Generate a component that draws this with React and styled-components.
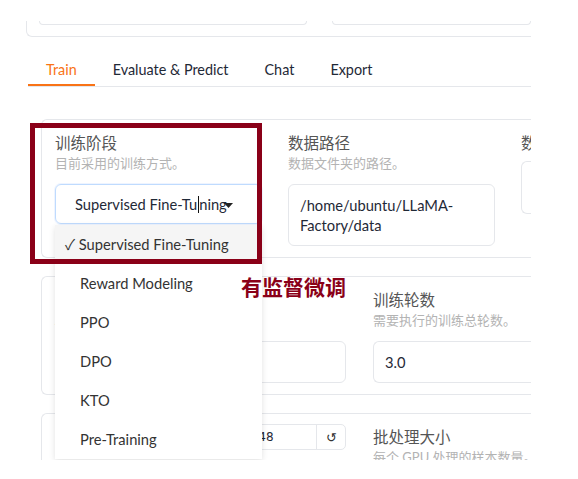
import React from 'react';
import styled, { createGlobalStyle } from 'styled-components';

const GlobalStyle = createGlobalStyle`
    body {
        margin: 0;
        background: #fff;
        font-family: Lato, "Noto Sans CJK SC", sans-serif;
        color: #1f2937;
    }
`

const Viewport = styled.div`
    position: relative;
    width: 531px;
    height: 460px;
    overflow: hidden;
`

const TopCard = styled.div`
    box-sizing: border-box;
    height: 16px;
    margin: 21px 0 0 26px;
    border: 1px solid #e5e7eb;
    border-top: none;
    border-right: none;
    border-radius: 0 0 0 6px;
    display: flex;
    align-items: flex-start;
    gap: 25px;
    padding: 0 0 0 12px;
`

const GhostInput = styled.div`
    box-sizing: border-box;
    height: 4px;
    border: 1px solid #e5e7eb;
    border-top: none;
    border-radius: 0 0 6px 6px;
    width: ${props => props.$w ? props.$w + 'px' : 'auto'};
    flex: ${props => props.$w ? 'none' : '1'};
`

const TabBar = styled.div`
    display: flex;
    margin: 17px 0 0 28px;
    border-bottom: 1px solid #e5e7eb;
`

const Tab = styled.div`
    height: 32px;
    line-height: 31px;
    padding: 0 18px;
    font-size: 14.4px;
    color: ${props => props.$active ? '#f97316' : '#1f2937'};
    box-shadow: ${props => props.$active ? 'inset 0 -2px 0 #f97316' : 'none'};
    margin-bottom: -1px;
    border-bottom: 1px solid transparent;
`

const Panel = styled.div`
    display: flex;
    flex-direction: column;
    gap: 18px;
    padding: 32px 0 0 41px;
`

const Card = styled.div`
    display: flex;
    gap: ${props => props.$gap || 26}px;
    border: 1px solid #e5e7eb;
    border-right: none;
    border-radius: 6px 0 0 6px;
    padding: 13px 0 11px 13px;
`

const Field = styled.div`
    position: relative;
    display: flex;
    flex-direction: column;
    flex: ${props => props.$w ? 'none' : '1'};
    width: ${props => props.$w ? props.$w + 'px' : 'auto'};
    min-width: 0;
`

const Label = styled.div`
    font-size: 15.5px;
    line-height: 20px;
    color: #555;
    white-space: nowrap;
`

const Info = styled.div`
    font-size: 13px;
    line-height: 18px;
    margin-top: 1px;
    color: #b3b3b3;
    white-space: nowrap;
`

const SelectWrap = styled.div`
    position: relative;
    margin-top: 12px;
`

const SelectBox = styled.div`
    box-sizing: border-box;
    height: 40px;
    display: flex;
    align-items: center;
    padding-left: 19px;
    font-size: 14.7px;
    border: 1px solid #bfdbfe;
    border-radius: 6px;
    box-shadow: 0 0 0 1px #eef4ff;
    white-space: nowrap;
    position: relative;
`

const Caret = styled.span`
    display: inline-block;
    width: 1px;
    height: 17px;
    background: #111;
    margin: 0 0.5px;
`

const Arrow = styled.svg`
    position: absolute;
    left: 168px;
    top: 18px;
`

const Menu = styled.ul`
    position: absolute;
    top: calc(100% + 1px);
    left: 0;
    width: 207px;
    margin: 0;
    padding: 0;
    list-style: none;
    background: #fff;
    box-shadow: 0 2px 6px rgba(0, 0, 0, 0.12);
    z-index: 2;
`

const MenuItem = styled.li`
    height: 39px;
    line-height: 39px;
    font-size: 14.7px;
    color: #333;
    padding-left: ${props => props.$selected ? 10 : 25}px;
    background: ${props => props.$selected ? '#f5f5f5' : '#fff'};
    white-space: nowrap;
`

const TextBox = styled.div`
    box-sizing: border-box;
    margin-top: ${props => props.$mt || 12}px;
    height: ${props => props.$h}px;
    padding: 10px 11px;
    font-size: 14.7px;
    line-height: 20px;
    border: 1px solid #e5e7eb;
    border-right: ${props => props.$open ? 'none' : '1px solid #e5e7eb'};
    border-radius: ${props => props.$open ? '6px 0 0 6px' : '6px'};
    color: #1f2937;
`

const SliderHead = styled.div`
    display: flex;
    justify-content: space-between;
    align-items: center;
    height: 20px;
`

const NumberGroup = styled.div`
    display: flex;
    height: 26px;
    border: 1px solid #e5e7eb;
    border-radius: 5px;
    box-sizing: border-box;
`

const NumberInput = styled.div`
    width: 78px;
    padding-left: 5px;
    box-sizing: border-box;
    font-family: "DejaVu Sans", sans-serif;
    font-size: 12px;
    line-height: 24px;
    color: #1f2937;
`

const ResetBtn = styled.div`
    width: 28px;
    border-left: 1px solid #e5e7eb;
    text-align: center;
    font-size: 13px;
    line-height: 24px;
    color: #333;
`

const Highlight = styled.div`
    position: absolute;
    left: 30px;
    top: 123px;
    width: 232px;
    height: 141px;
    box-sizing: border-box;
    border: 5px solid #8a0018;
    z-index: 3;
    pointer-events: none;
`

const Note = styled.div`
    position: absolute;
    left: 241px;
    top: 273px;
    font-size: 21px;
    line-height: 26px;
    font-weight: 700;
    color: #8a0018;
    z-index: 3;
    font-family: "Noto Sans CJK SC", sans-serif;
`

const stages = ['Reward Modeling', 'PPO', 'DPO', 'KTO', 'Pre-Training'];

export default function App() {
    return (
        <>
            <GlobalStyle />
            <Viewport>
                <TopCard>
                    <GhostInput $w={268} />
                    <GhostInput />
                </TopCard>
                <TabBar>
                    <Tab $active>Train</Tab>
                    <Tab>Evaluate &amp; Predict</Tab>
                    <Tab>Chat</Tab>
                    <Tab>Export</Tab>
                </TabBar>
                <Panel>
                    <Card>
                        <Field $w={207}>
                            <Label>训练阶段</Label>
                            <Info>目前采用的训练方式。</Info>
                            <SelectWrap>
                                <SelectBox>
                                    Supervised Fine-Tu<Caret />ning
                                    <Arrow width="9" height="5" viewBox="0 0 9 5">
                                        <path d="M0 0 L9 0 L4.5 5 Z" fill="#222" />
                                    </Arrow>
                                </SelectBox>
                                <Menu>
                                    <MenuItem $selected>✓ Supervised Fine-Tuning</MenuItem>
                                    {stages.map(s => <MenuItem key={s}>{s}</MenuItem>)}
                                </Menu>
                            </SelectWrap>
                        </Field>
                        <Field $w={207}>
                            <Label>数据路径</Label>
                            <Info>数据文件夹的路径。</Info>
                            <TextBox $h={62}>/home/ubuntu/LLaMA-<br />Factory/data</TextBox>
                        </Field>
                        <Field>
                            <Label>数据集</Label>
                            <TextBox $h={53} $mt={8} $open />
                        </Field>
                    </Card>
                    <Card $gap={27}>
                        <Field $w={291}>
                            <Label>学习率</Label>
                            <Info>AdamW 优化器的初始学习率。</Info>
                            <TextBox $h={42}>5e-5</TextBox>
                        </Field>
                        <Field>
                            <Label>训练轮数</Label>
                            <Info>需要执行的训练总轮数。</Info>
                            <TextBox $h={42} $open>3.0</TextBox>
                        </Field>
                    </Card>
                    <Card $gap={27}>
                        <Field $w={291}>
                            <SliderHead>
                                <Label>截断长度</Label>
                                <NumberGroup>
                                    <NumberInput>2048</NumberInput>
                                    <ResetBtn>↺</ResetBtn>
                                </NumberGroup>
                            </SliderHead>
                        </Field>
                        <Field>
                            <Label>批处理大小</Label>
                            <Info>每个 GPU 处理的样本数量。</Info>
                        </Field>
                    </Card>
                </Panel>
                <Highlight />
                <Note>有监督微调</Note>
            </Viewport>
        </>
    );
}
